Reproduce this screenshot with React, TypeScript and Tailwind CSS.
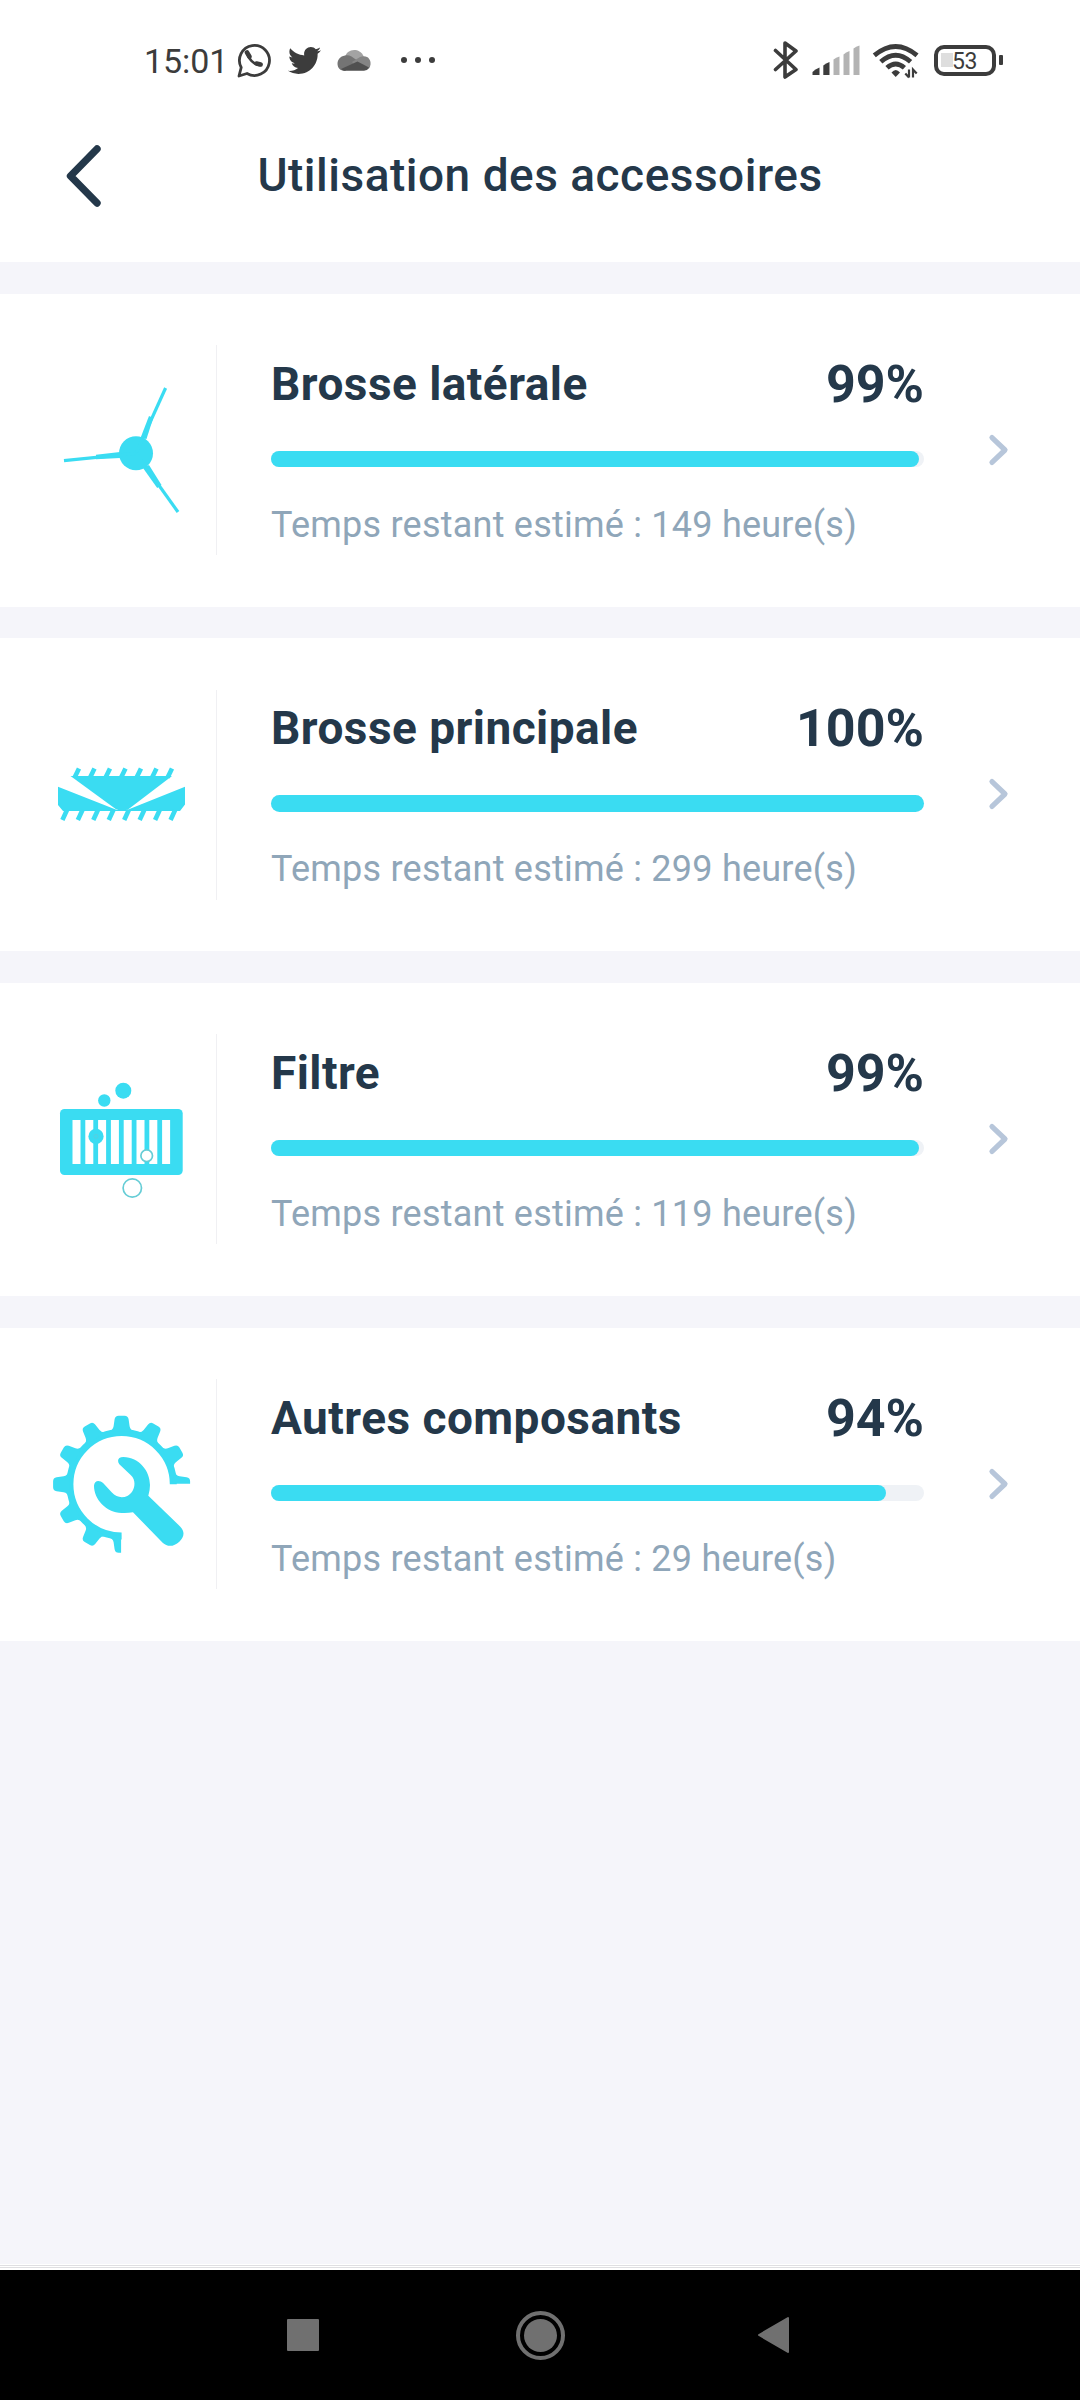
import React from 'react';
import { FaTwitter } from 'react-icons/fa';

interface Accessory {
  name: string;
  percent: number;
  fill: number;
  hours: number;
  icon: React.ReactNode;
}

const CYAN = '#3adcf2';
const INK = '#3c3c3c';

const SideBrushIcon = () => (
  <svg width="160" height="160" viewBox="40 370 160 160" fill={CYAN} stroke={CYAN}>
    <circle cx="136" cy="453.3" r="17" stroke="none" />
    <g strokeWidth="3.2">
      <path d="M136 453.3 165.6 388" />
      <path d="M136 453.3 64 460.7" />
      <path d="M136 453.3 178 512" />
    </g>
    <g stroke="none">
      <path d="M140.5 438 149 416 153.2 418 146.5 439Z" />
      <path d="M120 452 96 454.8 96 459.2 120 458Z" />
      <path d="M143 468 157.2 488 161.5 485 149 465Z" />
    </g>
  </svg>
);

const MainBrushIcon = () => (
  <svg width="160" height="160" viewBox="40 715 160 160" fill={CYAN}>
    <path d="M70.5 776H172L128 809.6 121.5 811 116 809.3Z" />
    <path d="M58 786.7 117 810 127 810 185 786.7V804.5L180 811H63L58 805Z" />
    <g stroke={CYAN} strokeWidth="4.6" fill="none">
      {[0, 1, 2, 3, 4, 5, 6].map((i) => (
        <path key={i} d={`M${74.6 + i * 15.5} 777.5l4.4-9`} />
      ))}
      {[0, 1, 2, 3, 4, 5, 6, 7].map((i) => (
        <path key={i} d={`M${67 + i * 15.45} 810l-4.6 10`} />
      ))}
    </g>
  </svg>
);

const FilterIcon = () => (
  <svg width="160" height="160" viewBox="40 1059 160 160" fill={CYAN}>
    <circle cx="123.3" cy="1090.7" r="8" />
    <circle cx="104.3" cy="1100.5" r="6.2" />
    <rect x="60" y="1109" width="122.7" height="66" rx="4.5" />
    {[0, 1, 2, 3, 4, 5, 6, 7].map((i) => (
      <rect key={i} x={72.5 + i * 12.8} y="1120" width="8" height="44" fill="#fff" />
    ))}
    <circle cx="96" cy="1136.4" r="7.6" />
    <circle cx="96" cy="1136.4" r="2" fill="none" stroke="#62c9d8" strokeWidth="0.7" />
    <g fill="#fff" stroke="#66cdd6" strokeWidth="1.7">
      <circle cx="146.7" cy="1155.7" r="5.8" />
      <circle cx="132.3" cy="1188" r="9.2" />
    </g>
  </svg>
);

const ToolsIcon = () => (
  <svg width="160" height="160" viewBox="40 1404 160 160" fill={CYAN}>
    <g transform="translate(121.6 1484.3)">
      <path d="M51.7 0A51.7 51.7 0 1 0 0 51.7" fill="none" stroke={CYAN} strokeWidth="7" />
      {[0, 30, 60, 210, 240, 270, 300, 330].map((a) => (
        <path
          key={a}
          transform={`rotate(${a})`}
          d="M-14-52.5Q-8.5-54-8-58L-7-65Q-6.4-68.5-3-68.5H3Q6.4-68.5 7-65L8-58Q8.5-54 14-52.5Z"
        />
      ))}
      <path d="M51-3 52.5-14Q54-8.5 58-8L65-7Q68.5-6.4 68.5-3V-.5H51Z" />
      <path d="M-1 51-14 52.5Q-8.5 54-8 58L-7 65Q-6.4 68.5-3 68.5H-.5V51Z" />
    </g>
    <path
      transform="translate(40 1370) scale(.3333)"
      d="M238 283C230 271 235 261 250 261C298 262 330 303 330 345Q330 362 325 377L421 470C436 486 432 502 418 515C401 531 382 531 368 518L279 427Q262 430 245 429C198 427 162 388 162 347C163 331 178 328 190 340L215 367C230 384 248 384 262 378C279 370 288 347 281 328Q279 321 272 315Z"
    />
  </svg>
);

const accessories: Accessory[] = [
  { name: 'Brosse latérale', percent: 99, fill: 99.2, hours: 149, icon: <SideBrushIcon /> },
  { name: 'Brosse principale', percent: 100, fill: 100, hours: 299, icon: <MainBrushIcon /> },
  { name: 'Filtre', percent: 99, fill: 99.2, hours: 119, icon: <FilterIcon /> },
  { name: 'Autres composants', percent: 94, fill: 94.2, hours: 29, icon: <ToolsIcon /> },
];

const StatusBar = () => (
  <div className="flex h-[88px] items-center pt-8 pl-[144px] pr-[77px] text-[#3c3c3c]">
    <span className="w-[93px] text-[34px] leading-[40px] tracking-[-0.1px] pt-[2px]">15:01</span>
    <svg width="34" height="36" viewBox="0 0 34 36" fill="none" stroke={INK}>
      <path d="M2 34 4.2 25.5A15 15 0 1 1 10 31.5Z" strokeWidth="2.8" strokeLinejoin="round" />
      <path d="M10.3 10.6C10.4 16 17 23.2 23.4 23.2" strokeWidth="2.6" />
      <path d="M10 10.5 12.4 14.5M19.5 21.6 23.6 22.5" strokeWidth="4.6" strokeLinecap="round" />
    </svg>
    <FaTwitter size={33} color={INK} className="ml-[17px]" />
    <svg className="ml-4" width="34" height="24" viewBox="0 0 34 24">
      <path d="M8 9.5C9 1 22 -1.5 26.5 8L28 14 10 18Z" fill="#a3a3a3" />
      <path d="M8 7.5C12 6.5 15 8.5 17 10.3L21 13 8 23C-2 23-2 9 8 7.5Z" fill="#747474" />
      <path d="M15 14 23 9C31 6.5 34 12 33.5 16.5Q33 21 29 22L20 20Z" fill="#858585" />
      <path d="M4 21 20.5 13.5 32 19.5Q30.5 22.5 27 22.8H8Q5.5 22.8 4 21Z" fill="#505050" />
    </svg>
    <div className="ml-[30px] flex gap-2">
      <i className="size-[6px] rounded-full bg-[#3c3c3c]" />
      <i className="size-[6px] rounded-full bg-[#3c3c3c]" />
      <i className="size-[6px] rounded-full bg-[#3c3c3c]" />
    </div>
    <div className="ml-auto flex items-center">
      <svg width="26" height="40" viewBox="774 40 26 40" fill="none" stroke={INK} strokeWidth="3.6" strokeLinejoin="round" strokeLinecap="round">
        <path d="M776.5 50.5 797 69.5 786 77V43L797 51 776.5 69.5" />
      </svg>
      <svg className="ml-3" width="50" height="40" viewBox="812 40 50 40">
        <g fill={INK}>
          <path d="M813.5 75V72Q816 69 820.5 67.5V75Z" />
          <path d="M824.3 75V65.5Q827 63 830.5 62V75Z" />
        </g>
        <g fill="#b3b3b3">
          <path d="M834.5 75V59.5Q837 57.5 840.5 56.5V75Z" />
          <path d="M844.5 75V54.5Q847 52 850.5 51V75Z" />
          <path d="M854.5 75V48.5Q857 46.5 860.5 45.5V75Z" />
        </g>
      </svg>
      <svg className="ml-[11px]" width="48" height="40" viewBox="873 40 48 40" fill="none" stroke={INK} strokeWidth="4.8">
        <path d="M875.3 55.3Q896.7 37.5 918 55.3" />
        <path d="M881.8 61.8Q896.7 48.5 911.6 61.8" />
        <path d="M888 67.8Q896.7 60 905.4 67.8" />
        <path d="M892.5 72.5Q896.7 67.5 901 72.5L896.7 77Z" fill={INK} stroke="none" />
        <path d="M910 69.5V77.5M906.3 73.5 910 77.5M914 77.5V69.5L917.7 73.5" strokeWidth="2.2" />
      </svg>
      <div className="ml-[14px] flex h-[31px] w-[62px] items-center rounded-[10px] border-4 border-[#3c3c3c] pl-[3px]">
        <i className="h-[14px] w-[12px] bg-[#dedede]" />
        <span className="-ml-px text-[23px] leading-6 tracking-[-0.4px] pt-[3px]">53</span>
      </div>
      <i className="ml-[3px] h-[10px] w-[4px] rounded-[1px] bg-[#3c3c3c]" />
    </div>
  </div>
);

const AccessoryCard: React.FC<{ item: Accessory }> = ({ item }) => (
  <div className="flex h-[313px] items-center bg-white pl-10">
    {item.icon}
    <div className="ml-4 h-[210px] w-px bg-[#f0f0f3]" />
    <div className="ml-[54px] h-full w-[653px] pt-[61px]">
      <div className="flex h-[60px] items-center justify-between text-[#24384a]">
        <span className="-mt-[2px] text-[46px] font-bold leading-[60px] tracking-[0.45px]">{item.name}</span>
        <span className="text-[52px] font-bold leading-[60px]">{item.percent}%</span>
      </div>
      <div className="mt-[36px] h-[16.5px] rounded-full bg-[#eff2f6]">
        <div className="h-full rounded-full bg-[#3adcf2]" style={{ width: `${item.fill}%` }} />
      </div>
      <p className="mt-[36.5px] text-[36px] leading-[42px] tracking-[0.23px] text-[#8fa6b9]">
        Temps restant estimé : {item.hours} heure(s)
      </p>
    </div>
    <svg className="ml-[63.5px] -mt-px" width="22" height="34" viewBox="0 0 22 34" fill="none" stroke="#b7c6da" strokeWidth="5.2" strokeLinecap="round" strokeLinejoin="round">
      <path d="M4 4.6 17 17 4 29.4" />
    </svg>
  </div>
);

const App: React.FC = () => (
  <div className="flex h-[2400px] w-[1080px] flex-col overflow-hidden bg-[#f5f5fa] font-['Roboto',sans-serif]">
    <div className="bg-white">
      <StatusBar />
      <div className="grid h-[174px] grid-cols-[200px_1fr_200px] items-center">
        <svg className="ml-[64px]" width="40" height="66" viewBox="0 0 40 66" fill="none" stroke="#24384a" strokeWidth="7.4" strokeLinecap="round" strokeLinejoin="round">
          <path d="M33 7 6.5 34 33 61" />
        </svg>
        <h1 className="text-center text-[46px] font-medium leading-[60px] tracking-[0.5px] text-[#24384a]">
          Utilisation des accessoires
        </h1>
      </div>
    </div>

    <div className="mt-[31.67px] flex flex-col gap-[31.67px]">
      {accessories.map((item) => (
        <AccessoryCard key={item.name} item={item} />
      ))}
    </div>

    {/* Android navigation */}
    <div className="mt-auto h-[6px] border-y border-white bg-white">
      <div className="h-[3px] border-y border-[#dfdfe2]" />
    </div>
    <div className="flex h-[130px] items-center bg-black pl-[287px]">
      <i className="size-8 rounded-[1px] bg-[#707070]" />
      <div className="ml-[197px] flex size-[49px] items-center justify-center rounded-full border-4 border-[#707070]">
        <i className="size-[33px] rounded-full bg-[#707070]" />
      </div>
      <svg className="ml-[192px]" width="34" height="38" viewBox="0 0 34 38">
        <path d="M2 19 31 2V36Z" fill="#707070" stroke="#707070" strokeWidth="2" strokeLinejoin="round" />
      </svg>
    </div>
  </div>
);

export default App;
